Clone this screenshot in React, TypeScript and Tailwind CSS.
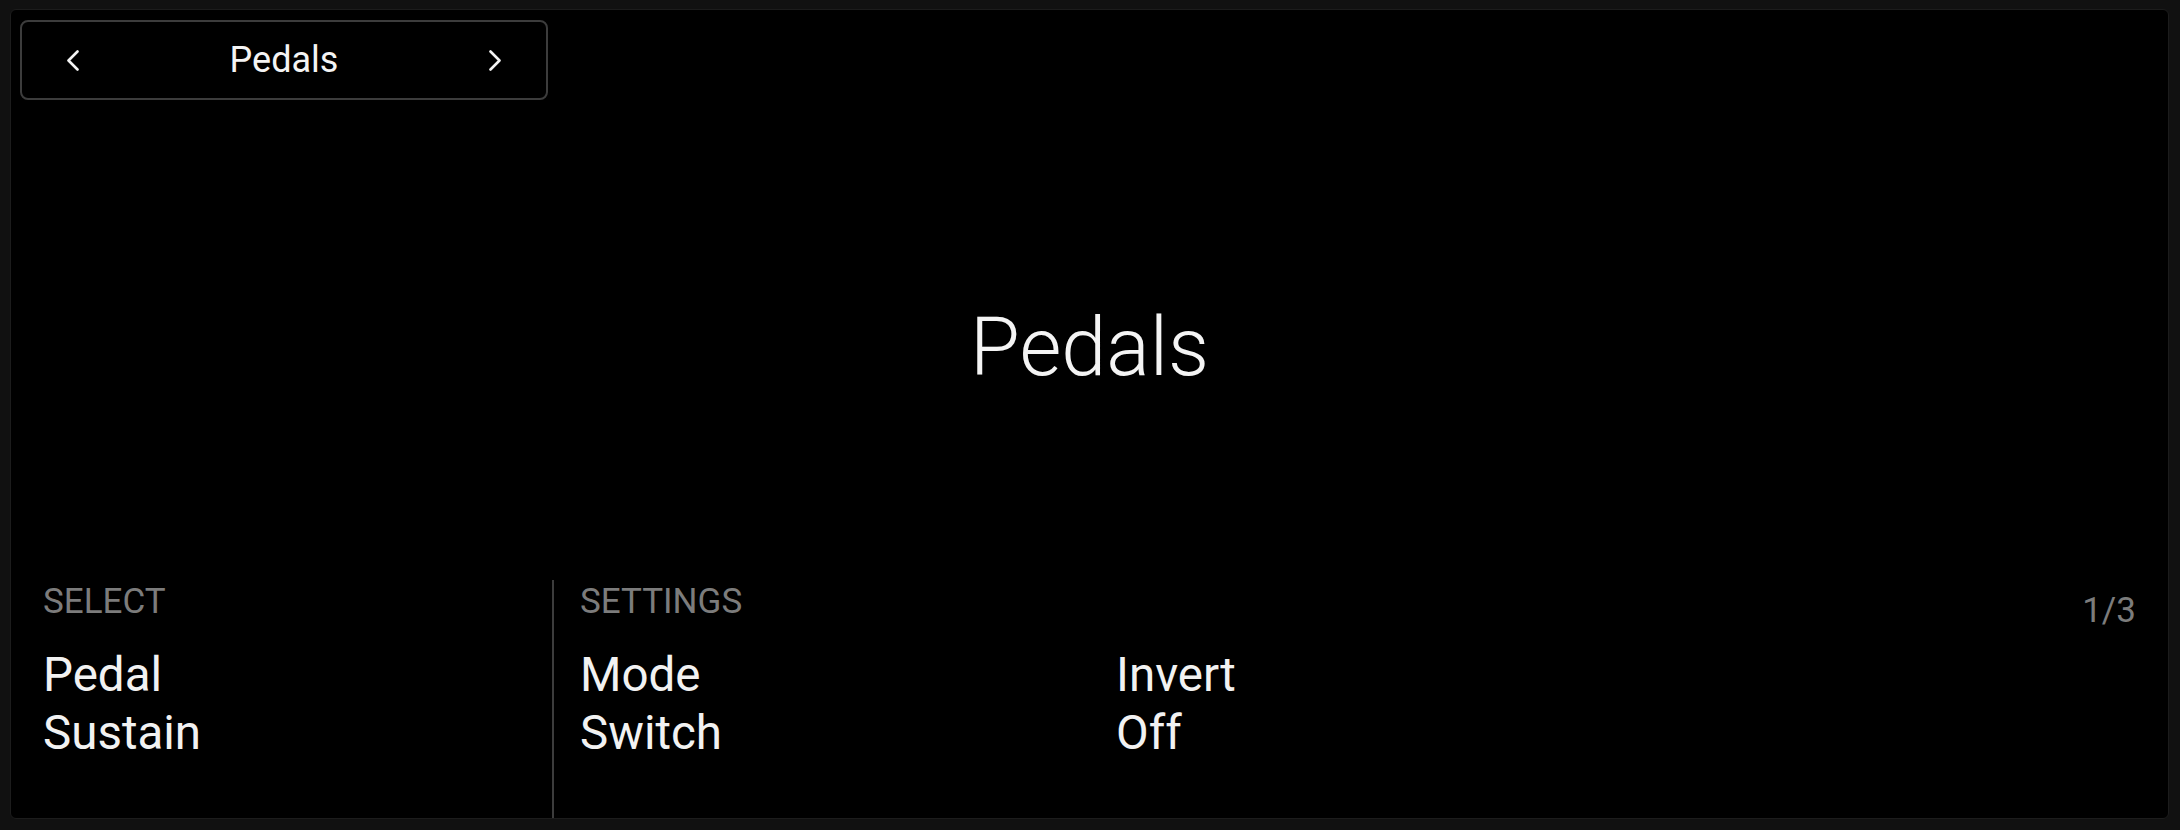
import { useState } from "react";

const Chevron = ({ dir }: { dir: "left" | "right" }) => (
  <svg width="12" height="21" viewBox="0 0 12 21" fill="none" className="shrink-0">
    <polyline
      points={dir === "left" ? "10.5,1.5 1.5,10.5 10.5,19.5" : "1.5,1.5 10.5,10.5 1.5,19.5"}
      stroke="#f4f4f4"
      strokeWidth="2.6"
      strokeLinecap="round"
      strokeLinejoin="round"
    />
  </svg>
);

const pages = ["Pedals"];

export default function App() {
  const [page] = useState(0);
  const title = pages[page];

  return (
    <div className="w-full h-screen bg-[#111111] pt-[9px] pl-[10px] pr-[11px] pb-[11px] font-[Roboto,sans-serif]">
      <div className="h-full bg-black rounded-[6px] border border-[#1c1c1c] flex flex-col overflow-hidden">
        {/* header selector */}
        <div className="mt-[10px] ml-[9px] w-[528px] h-[80px] shrink-0 border-2 border-[#3c3c3c] rounded-[8px] flex items-center justify-between px-[45px]">
          <Chevron dir="left" />
          <span className="text-[36px] text-[#f4f4f4]">{title}</span>
          <Chevron dir="right" />
        </div>

        {/* big title */}
        <div className="flex-1 flex items-center justify-center pt-[15px]">
          <h1 className="text-[81px] font-light text-[#f4f4f4]">{title}</h1>
        </div>

        {/* bottom section */}
        <div className="h-[238px] shrink-0 flex">
          <div className="w-[543px] border-r-2 border-[#3c3c3c] pl-[32px] pt-[2px]">
            <div className="text-[35px] leading-[40px] text-[#7c7c7c]">SELECT</div>
            <div className="mt-[24px] text-[47.5px] leading-[58px] text-[#f2f2f2]">
              <div>Pedal</div>
              <div>Sustain</div>
            </div>
          </div>

          <div className="flex-1 pl-[26px] pt-[2px]">
            <div className="text-[35px] leading-[40px] text-[#7c7c7c]">SETTINGS</div>
            <div className="mt-[24px] flex text-[47.5px] leading-[58px] text-[#f2f2f2]">
              <div className="w-[536px]">
                <div>Mode</div>
                <div>Switch</div>
              </div>
              <div className="w-[536px]">
                <div>Invert</div>
                <div>Off</div>
              </div>
            </div>
          </div>

          <div className="pr-[32px] pt-[11px] text-[35px] leading-[40px] text-[#7c7c7c]">1/3</div>
        </div>
      </div>
    </div>
  );
}
